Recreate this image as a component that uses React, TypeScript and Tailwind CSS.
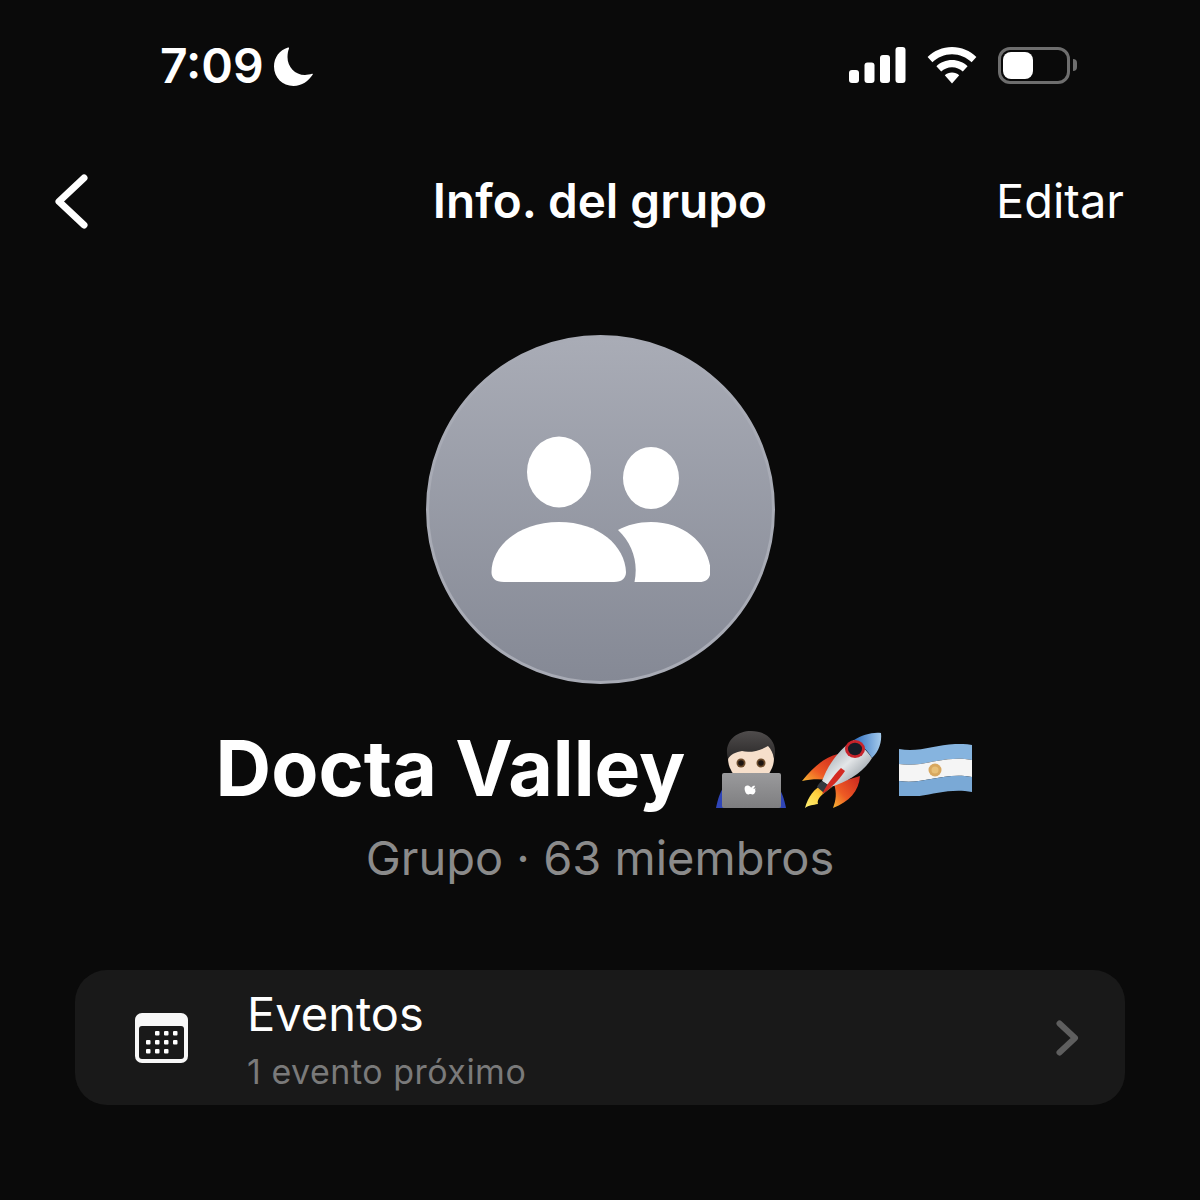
const font = { fontFamily: "Inter, 'Liberation Sans', sans-serif" };

function MoonIcon() {
  return (
    <svg width="39" height="39" viewBox="0 0 39 39" className="shrink-0">
      <path
        d="M14 .5C5.500 3 0 10.500 0 19.500 0 30.500 8.500 39 19.500 39c8.500 0 15-5 19.300-11.500.2-.5-.3-1-.8-.7-2 .7-5 1.200-7 1.200-10 0-17.500-8-17.500-18 0-3 .5-6 1.500-8.500.3-.7-.3-1.200-1-1z"
        fill="white"
      />
    </svg>
  );
}

function SignalIcon() {
  return (
    <svg width="57" height="36" viewBox="0 0 57 36" className="shrink-0">
      <rect x="0" y="23" width="10" height="13" rx="3" fill="white" />
      <rect x="15.500" y="15.500" width="10" height="20.500" rx="3" fill="white" />
      <rect x="31" y="8" width="10" height="28" rx="3" fill="white" />
      <rect x="46.500" y="0" width="10" height="36" rx="3" fill="white" />
    </svg>
  );
}

function WifiIcon() {
  return (
    <svg width="50" height="37" viewBox="0 0 50 37" className="shrink-0">
      <path
        d="M25 0C15.500 0 7 3.700.6 10l4.800 5.300C10.600 10.200 17.400 7.200 25 7.200s14.400 3 19.600 8.100L49.400 10C43 3.700 34.500 0 25 0z"
        fill="white"
      />
      <path
        d="M25 13c-6 0-11.500 2.300-15.600 6.200l4.800 5.300c2.800-2.700 6.600-4.300 10.800-4.300s8 1.600 10.800 4.300l4.800-5.300C36.500 15.300 31 13 25 13z"
        fill="white"
      />
      <path d="M25 25.500c-2.800 0-5.300 1-7.200 2.800L25 36.500l7.200-8.200c-1.900-1.800-4.400-2.800-7.200-2.800z" fill="white" />
    </svg>
  );
}

function BatteryIcon() {
  return (
    <div className="flex items-center gap-[3px]">
      <div className="flex h-[37px] w-[72px] items-center rounded-[12px] border-[3px] border-[#6e6e6e] p-[2px]">
        <div className="h-full w-[30px] rounded-[8px] bg-white" />
      </div>
      <div className="h-[12px] w-[4px] rounded-r-full bg-[#6e6e6e]" />
    </div>
  );
}

function BackChevron() {
  return (
    <svg width="33" height="55" viewBox="0 0 33 55" className="shrink-0">
      <path
        d="M29 4 4 27.500 29 51"
        fill="none"
        stroke="white"
        strokeWidth="7"
        strokeLinecap="round"
        strokeLinejoin="round"
      />
    </svg>
  );
}

function GroupIcon() {
  return (
    <svg width="220" height="148" viewBox="-1 0 220 148">
      <ellipse cx="68" cy="36" rx="32" ry="35.500" fill="white" />
      <ellipse cx="160" cy="42" rx="28" ry="31" fill="white" />
      <path
        d="M13 146c-9 0-12.500-4-12.500-10C.5 110 28 86 68 86s66 24 67 50c0 6-4 10-12 10H13z"
        fill="white"
      />
      <path
        d="M127 94c9-5 20-8 33-8 35 0 59 24 59.500 49 0 7-4 11-11 11h-65c4-20-2-38-16.500-52z"
        fill="white"
      />
    </svg>
  );
}

function CoderEmoji() {
  return (
    <svg width="70" height="78" viewBox="0 0 70 78" className="shrink-0">
      <defs>
        <linearGradient id="lid" x1="0" y1="0" x2="0" y2="1">
          <stop offset="0" stopColor="#9a9a9c" />
          <stop offset="1" stopColor="#7e7e80" />
        </linearGradient>
        <linearGradient id="hair" x1="0" y1="0" x2="0" y2="1">
          <stop offset="0" stopColor="#4f4c4c" />
          <stop offset="1" stopColor="#2b2929" />
        </linearGradient>
      </defs>
      <path d="M0 77c2-10 5-19 10-24h50c5 5 8 14 10 24z" fill="#2f45b8" />
      <ellipse cx="35" cy="27" rx="23" ry="25" fill="#f6dfcb" />
      <path
        d="M12 28C7 11 20 0 35 0s28 10 23 28c-1-6-3-10-6-13-8 5-19 7-26 5-6 1-11 3-14 8z"
        fill="url(#hair)"
      />
      <circle cx="25" cy="32" r="4.500" fill="#6b4a2a" />
      <circle cx="25" cy="32" r="2.800" fill="#1d1410" />
      <circle cx="45" cy="32" r="4.500" fill="#6b4a2a" />
      <circle cx="45" cy="32" r="2.800" fill="#1d1410" />
      <rect x="6" y="42" width="59" height="35" rx="2" fill="url(#lid)" />
      <path
        d="M35 57c1-2 3-2.500 4-2.200-.2 1.400-1 2.400-2 2.700 1 .2 2 .3 2.800-.3-.8 1-1 1.800-.2 2.800-.8 2.400-1.800 3.500-3 3.500-1 0-1-.5-2.200-.5s-1.400.5-2.300.5c-2 0-3.500-3.500-3.500-6 0-3 3.500-4.200 6.400-1z"
        fill="white"
      />
    </svg>
  );
}

function RocketEmoji() {
  return (
    <svg width="81" height="77" viewBox="0 0 81 77" className="shrink-0">
      <defs>
        <linearGradient id="fin" x1="1" y1="0" x2="0" y2="1">
          <stop offset="0" stopColor="#c9251f" />
          <stop offset="0.6" stopColor="#ee5a24" />
          <stop offset="1" stopColor="#f7b733" />
        </linearGradient>
        <linearGradient id="flame" x1="1" y1="0" x2="0" y2="1">
          <stop offset="0" stopColor="#f08a1d" />
          <stop offset="0.5" stopColor="#ffd23f" />
          <stop offset="1" stopColor="#fff176" />
        </linearGradient>
        <linearGradient id="hull" x1="0" y1="0" x2="1" y2="1">
          <stop offset="0" stopColor="#7d8a95" />
          <stop offset="0.5" stopColor="#e3e6e8" />
          <stop offset="1" stopColor="#6f7a84" />
        </linearGradient>
        <linearGradient id="nose" x1="0" y1="0" x2="1" y2="0">
          <stop offset="0" stopColor="#2f6fc0" />
          <stop offset="1" stopColor="#a5cbec" />
        </linearGradient>
      </defs>
      <path d="M36 22C23 25 11 35 0 49c9-2 18-2 27-1z" fill="url(#fin)" />
      <path d="M58 44C57 59 47 70 31 76c3-8 4-15 1-24z" fill="url(#fin)" />
      <path d="M22 52C12 56 6 65 3 76c4-3 8-3 13-4-1-3 1-7 5-10l9-7z" fill="url(#flame)" />
      <path d="M20 49C26 33 37 17 52 8c6 4 14 12 18 18C62 40 45 50 29 55z" fill="url(#hull)" />
      <path d="M52 8c8-5 18-8 27-7 1 9-2 18-9 25-4-7-11-14-18-18z" fill="url(#nose)" />
      <path d="M20 49c-3 2-4 4-5 6l7 6c2-1 4-3 7-6z" fill="#34393f" />
      <ellipse cx="53" cy="17" rx="10" ry="9" fill="#c7232b" />
      <ellipse cx="53" cy="17" rx="7" ry="6.200" fill="#161c26" />
      <path d="M43 39c-6 9-14 17-23 23 4-8 11-18 19-26z" fill="#d42a22" />
    </svg>
  );
}

function FlagEmoji() {
  return (
    <svg width="74" height="52" viewBox="0 0 74 52" className="shrink-0">
      <path d="M0 5c24 5 44-9 73-4v15c-29-5-49 8-73 4z" fill="#86b4df" />
      <path d="M0 20c24 4 44-9 73-4v17c-29-5-49 8-73 4z" fill="#f5f5f5" />
      <path d="M0 37c24 4 44-9 73-4v15c-29-5-49 8-73 4z" fill="#7aa9d6" />
      <circle cx="36" cy="26" r="6.500" fill="#d8a860" />
      <circle cx="36" cy="26" r="3.500" fill="#e8c078" />
    </svg>
  );
}

function CalendarIcon() {
  const dots = [
    [22, 20], [31, 20], [40, 20],
    [13, 29], [22, 29], [31, 29], [40, 29],
    [13, 38], [22, 38], [31, 38],
  ];
  return (
    <svg width="53" height="50" viewBox="0 0 53 50" className="shrink-0">
      <rect width="53" height="50" rx="7" fill="#f7f7f7" />
      <rect x="4" y="13" width="45" height="33" rx="3" fill="#191919" />
      {dots.map(([x, y]) => (
        <rect key={`${x}-${y}`} x={x - 2} y={y - 2} width="4.500" height="4.500" rx="1" fill="white" />
      ))}
    </svg>
  );
}

function CardChevron() {
  return (
    <svg width="23" height="36" viewBox="0 0 23 36" className="shrink-0">
      <path
        d="M3.500 3.500 19 18 3.500 32.500"
        fill="none"
        stroke="#5e5e5e"
        strokeWidth="6"
        strokeLinecap="round"
        strokeLinejoin="round"
      />
    </svg>
  );
}

export default function App() {
  return (
    <div className="flex h-[1200px] w-[1200px] flex-col overflow-hidden bg-[#0a0a0a]" style={font}>
      {/* status bar */}
      <div className="flex h-[130px] items-center justify-between pl-[160px] pr-[123px]">
        <div className="flex items-center gap-[10px] pt-[2px]">
          <span className="text-[48px] font-semibold leading-none text-white">7:09</span>
          <MoonIcon />
        </div>
        <div className="flex items-center gap-[21px]">
          <SignalIcon />
          <WifiIcon />
          <BatteryIcon />
        </div>
      </div>

      {/* nav */}
      <div className="grid h-[142px] grid-cols-[1fr_auto_1fr] items-center px-[55px]">
        <BackChevron />
        <span className="pt-[2px] text-[47.7px] font-semibold text-white">Info. del grupo</span>
        <span className="mr-[21px] justify-self-end text-[47px] text-white">Editar</span>
      </div>

      <div className="flex flex-col items-center pt-[63px]">
        <div className="flex h-[349px] w-[349px] items-center justify-center rounded-full border-[3px] border-[#a8abb5] bg-gradient-to-b from-[#a9acb6] to-[#858995]">
          <GroupIcon />
        </div>
        <div className="mt-[36px] flex items-center pr-[11px]">
          <span className="text-[77px] font-bold leading-[96px] text-white">Docta Valley</span>
          <div className="ml-[31px] mt-[4px] flex items-center gap-[16px]">
            <CoderEmoji />
            <RocketEmoji />
            <FlagEmoji />
          </div>
        </div>
        <div className="mt-[12px] text-[47px] leading-[60px] text-[#8b8b8b]">Grupo · 63 miembros</div>
      </div>

      {/* events card */}
      <div className="mx-[75px] mt-[82px] flex h-[135px] items-center rounded-[32px] bg-[#191919] pl-[60px] pr-[46px]">
        <CalendarIcon />
        <div className="ml-[59px] flex flex-1 flex-col gap-[8px] pt-[4px]">
          <span className="text-[47px] leading-[56px] text-white">Eventos</span>
          <span className="text-[34px] leading-[44px] tracking-[0.5px] text-[#7a7a7a]">1 evento próximo</span>
        </div>
        <CardChevron />
      </div>
    </div>
  );
}
